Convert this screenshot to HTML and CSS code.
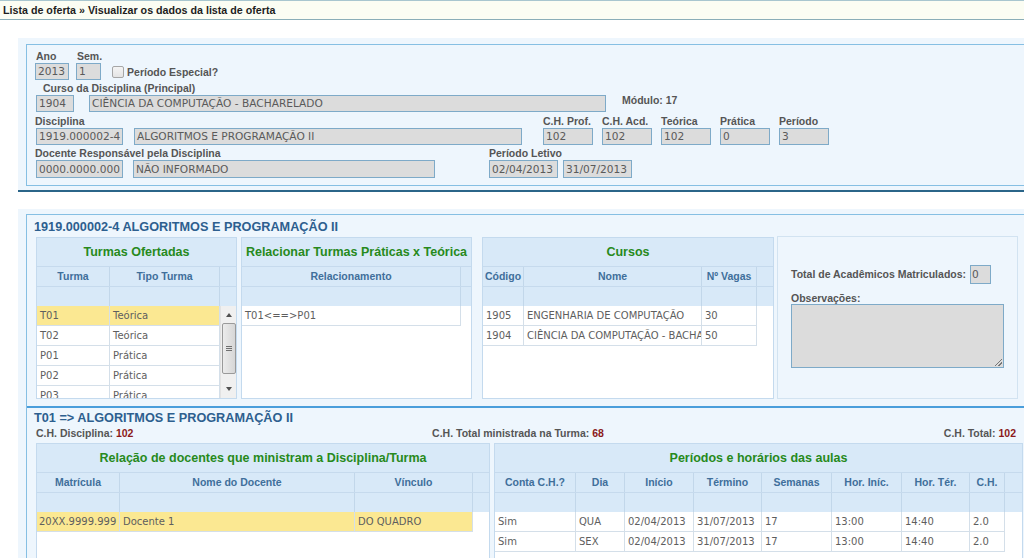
FILE: index.html
```html
<!DOCTYPE html>
<html lang="pt-BR">
<head>
<meta charset="utf-8">
<title>Lista de oferta</title>
<link rel="stylesheet" href="styles.css">
</head>
<body>
<div class="topbar">Lista de oferta » Visualizar os dados da lista de oferta</div>

<div class="panel p1">
  <div class="fs">
    <div class="row r1">
      <div class="field"><div class="lbl lbl-ano">Ano</div><div class="inp w-ano">2013</div></div>
      <div class="field f-sem"><div class="lbl">Sem.</div><div class="inp w-sem">1</div></div>
      <div class="chk-wrap"><span class="chk"></span><span class="lbl chk-lbl">Período Especial?</span></div>
    </div>
    <div class="row r2">
      <div class="field">
        <div class="lbl lbl-curso">Curso da Disciplina (Principal)</div>
        <div class="pair"><div class="inp w-cod">1904</div><div class="inp w-curso">CIÊNCIA DA COMPUTAÇÃO - BACHARELADO</div></div>
      </div>
      <div class="lbl modulo">Módulo: 17</div>
    </div>
    <div class="row r3">
      <div class="field">
        <div class="lbl">Disciplina</div>
        <div class="pair"><div class="inp w-disc">1919.000002-4</div><div class="inp w-discn">ALGORITMOS E PROGRAMAÇÃO II</div></div>
      </div>
      <div class="field f-ch1"><div class="lbl">C.H. Prof.</div><div class="inp w-ch">102</div></div>
      <div class="field f-ch"><div class="lbl">C.H. Acd.</div><div class="inp w-ch">102</div></div>
      <div class="field f-ch"><div class="lbl">Teórica</div><div class="inp w-ch">102</div></div>
      <div class="field f-ch"><div class="lbl">Prática</div><div class="inp w-ch">0</div></div>
      <div class="field f-ch"><div class="lbl">Período</div><div class="inp w-ch">3</div></div>
    </div>
    <div class="row r4">
      <div class="field">
        <div class="lbl">Docente Responsável pela Disciplina</div>
        <div class="pair"><div class="inp w-disc">0000.0000.000</div><div class="inp w-doc">NÃO INFORMADO</div></div>
      </div>
      <div class="field f-per">
        <div class="lbl">Período Letivo</div>
        <div class="pair pair-date"><div class="inp w-date">02/04/2013</div><div class="inp w-date">31/07/2013</div></div>
      </div>
    </div>
  </div>
</div>

<div class="panel p2">
  <div class="box2">
    <div class="sec sec2">
      <div class="sec-title">1919.000002-4 ALGORITMOS E PROGRAMAÇÃO II</div>
      <div class="grids">
        <div class="grid g-turmas">
          <div class="gtitle">Turmas Ofertadas</div>
          <div class="hrow cols-turmas"><div class="hc">Turma</div><div class="hc">Tipo Turma</div><div class="hc sp"></div></div>
          <div class="hrow cols-turmas"><div class="hc"></div><div class="hc"></div><div class="hc sp"></div></div>
          <div class="gdata scrolling">
            <div class="rows">
              <div class="drow cols-turmas-d sel"><div class="dc">T01</div><div class="dc">Teórica</div></div>
              <div class="drow cols-turmas-d"><div class="dc">T02</div><div class="dc">Teórica</div></div>
              <div class="drow cols-turmas-d"><div class="dc">P01</div><div class="dc">Prática</div></div>
              <div class="drow cols-turmas-d"><div class="dc">P02</div><div class="dc">Prática</div></div>
              <div class="drow cols-turmas-d"><div class="dc">P03</div><div class="dc">Prática</div></div>
            </div>
            <div class="sbar">
              <div class="sarrow up"></div>
              <div class="sthumb"><span class="grip"></span></div>
              <div class="sarrow down"></div>
            </div>
          </div>
        </div>

        <div class="grid g-rel">
          <div class="gtitle">Relacionar Turmas Práticas x Teórica</div>
          <div class="hrow cols-rel"><div class="hc">Relacionamento</div><div class="hc sp"></div></div>
          <div class="hrow cols-rel"><div class="hc"></div><div class="hc sp"></div></div>
          <div class="gdata">
            <div class="drow cols-rel-d"><div class="dc">T01&lt;==&gt;P01</div></div>
          </div>
        </div>

        <div class="grid g-cur">
          <div class="gtitle">Cursos</div>
          <div class="hrow cols-cur"><div class="hc">Código</div><div class="hc">Nome</div><div class="hc">Nº Vagas</div><div class="hc sp"></div></div>
          <div class="hrow cols-cur"><div class="hc"></div><div class="hc"></div><div class="hc"></div><div class="hc sp"></div></div>
          <div class="gdata">
            <div class="drow cols-cur-d"><div class="dc">1905</div><div class="dc">ENGENHARIA DE COMPUTAÇÃO</div><div class="dc">30</div></div>
            <div class="drow cols-cur-d"><div class="dc">1904</div><div class="dc">CIÊNCIA DA COMPUTAÇÃO - BACHARELADO</div><div class="dc">50</div></div>
          </div>
        </div>

        <div class="infobox">
          <div class="info-row"><span class="lbl">Total de Acadêmicos Matriculados:</span><div class="inp w-tot">0</div></div>
          <div class="lbl obs-lbl">Observações:</div>
          <div class="textarea"><span class="resize"></span></div>
        </div>
      </div>
    </div>

    <div class="sec sec3">
      <div class="sec-title">T01 =&gt; ALGORITMOS E PROGRAMAÇÃO II</div>
      <div class="chline">
        <div class="ch-left">C.H. Disciplina: <span class="val">102</span></div>
        <div class="ch-mid">C.H. Total ministrada na Turma: <span class="val">68</span></div>
        <div class="ch-right">C.H. Total: <span class="val">102</span></div>
      </div>
      <div class="grids grids3">
        <div class="grid g-doc">
          <div class="gtitle">Relação de docentes que ministram a Disciplina/Turma</div>
          <div class="hrow cols-doc"><div class="hc">Matrícula</div><div class="hc">Nome do Docente</div><div class="hc">Vínculo</div><div class="hc sp"></div></div>
          <div class="hrow cols-doc"><div class="hc"></div><div class="hc"></div><div class="hc"></div><div class="hc sp"></div></div>
          <div class="gdata tall">
            <div class="drow cols-doc-d sel"><div class="dc tight">20XX.9999.999</div><div class="dc">Docente 1</div><div class="dc">DO QUADRO</div></div>
          </div>
        </div>

        <div class="grid g-per">
          <div class="gtitle">Períodos e horários das aulas</div>
          <div class="hrow cols-per"><div class="hc">Conta C.H.?</div><div class="hc">Dia</div><div class="hc">Início</div><div class="hc">Término</div><div class="hc">Semanas</div><div class="hc">Hor. Iníc.</div><div class="hc">Hor. Tér.</div><div class="hc">C.H.</div><div class="hc sp"></div></div>
          <div class="hrow cols-per"><div class="hc"></div><div class="hc"></div><div class="hc"></div><div class="hc"></div><div class="hc"></div><div class="hc"></div><div class="hc"></div><div class="hc"></div><div class="hc sp"></div></div>
          <div class="gdata tall">
            <div class="drow cols-per-d"><div class="dc">Sim</div><div class="dc">QUA</div><div class="dc">02/04/2013</div><div class="dc">31/07/2013</div><div class="dc">17</div><div class="dc">13:00</div><div class="dc">14:40</div><div class="dc">2.0</div></div>
            <div class="drow cols-per-d"><div class="dc">Sim</div><div class="dc">SEX</div><div class="dc">02/04/2013</div><div class="dc">31/07/2013</div><div class="dc">17</div><div class="dc">13:00</div><div class="dc">14:40</div><div class="dc">2.0</div></div>
          </div>
        </div>
      </div>
    </div>
  </div>
</div>
</body>
</html>
```

FILE: styles.css
```css
html, body {
  margin: 0;
  padding: 0;
  width: 1024px;
  height: 558px;
  overflow: hidden;
  background: #ffffff;
}

body {
  font-family: "DejaVu Sans", Verdana, sans-serif;
  font-size: 10.6px;
  color: #555555;
}

.topbar {
  box-sizing: border-box;
  height: 20px;
  line-height: 18px;
  border-top: 1px solid #a8c6cf;
  border-bottom: 1px solid #8aaeb8;
  background: #fbfdf3;
  padding-left: 3px;
  font-family: "Liberation Sans", Arial, sans-serif;
  font-weight: bold;
  font-size: 10.7px;
  color: #1e1e1e;
}

.lbl {
  font-family: "Liberation Sans", Arial, sans-serif;
  font-weight: bold;
  font-size: 10.5px;
  color: #555555;
  line-height: 13px;
  height: 13px;
  white-space: nowrap;
}

.panel {
  margin-left: 18px;
  background: #eef6fd;
}

/* ---------- panel 1 ---------- */
.p1 {
  margin-top: 18px;
  padding: 6px 0 4px 8px;
  border-bottom: 2px solid #2b6589;
}

.fs {
  border: 1px solid #86bfe3;
  border-right: none;
  padding: 5px 0 7px 8px;
}

.row {
  display: flex;
  align-items: flex-end;
}

.r2 { margin-top: 2px; }
.r3 { margin-top: 3px; }
.r4 { margin-top: 2px; }

.field {
  display: flex;
  flex-direction: column;
}

.pair {
  display: flex;
  margin-left: 1px;
}

.inp {
  box-sizing: border-box;
  height: 17px;
  line-height: 15px;
  background: #dcdcdc;
  border: 1px solid #7eaac8;
  padding-left: 2px;
  color: #5a5a5a;
  white-space: nowrap;
  overflow: hidden;
}

.lbl-ano { padding-left: 1px; }
.w-ano { width: 34px; }
.f-sem { margin-left: 7px; }
.f-sem .lbl { padding-left: 1px; }
.w-sem { width: 25px; }

.chk-wrap {
  display: flex;
  align-items: center;
  margin-left: 10px;
  margin-bottom: 1px;
}

.chk {
  width: 12px;
  height: 12px;
  box-sizing: border-box;
  border: 1px solid #a6a6a6;
  border-radius: 2px;
  background: linear-gradient(#f4f4f4, #e4e4e4);
}

.chk-lbl { margin-left: 3px; margin-top: 2px; }

.lbl-curso { padding-left: 8px; }
.w-cod { width: 38px; }
.w-curso { width: 517px; margin-left: 15px; }
.modulo { margin-left: 16px; margin-bottom: 5px; }

.w-disc { width: 87px; }
.w-discn { width: 388px; margin-left: 11px; }
.f-ch1 { margin-left: 21px; }
.f-ch { margin-left: 9px; }
.w-ch { width: 50px; }

.w-doc { width: 302px; margin-left: 10px; }
.f-per { margin-left: 54px; }
.pair-date { margin-left: 0; }
.w-date { width: 69px; }
.pair-date .w-date + .w-date { margin-left: 5px; }
.r4 .inp { height: 18px; line-height: 16px; }

/* ---------- panel 2/3 ---------- */
.p2 {
  margin-top: 17px;
  padding: 5px 0 0 8px;
  height: 400px;
}

.box2 {
  border-left: 1px solid #86bfe3;
  border-top: 1px solid #86bfe3;
  height: 100%;
}

.sec {
  padding-left: 9px;
}

.sec2 { padding-top: 4px; }

.sec-title {
  font-family: "Liberation Sans", Arial, sans-serif;
  font-weight: bold;
  font-size: 12.7px;
  line-height: 16px;
  height: 16px;
  color: #2d5f8f;
  margin-left: -2px;
  margin-bottom: 2px;
  white-space: nowrap;
}

.grids {
  display: flex;
  align-items: flex-start;
}

.grid {
  border: 1px solid #c4daee;
  background: #ffffff;
  flex: none;
  box-sizing: border-box;
}

.gtitle {
  height: 28px;
  line-height: 28px;
  background: #d8e9f8;
  text-align: center;
  font-family: "Liberation Sans", Arial, sans-serif;
  font-weight: bold;
  font-size: 12.5px;
  color: #278a1c;
  white-space: nowrap;
}

.hrow {
  display: grid;
  background: #d8e9f8;
  border-top: 1px solid #c6daed;
  height: 20px;
  box-sizing: border-box;
}

.hc {
  border-right: 1px solid #c2d7ea;
  text-align: center;
  font-family: "Liberation Sans", Arial, sans-serif;
  font-weight: bold;
  font-size: 10.5px;
  line-height: 18px;
  color: #406f9b;
  white-space: nowrap;
  overflow: hidden;
}

.hc.sp { border-right: none; }

.gdata {
  height: 92px;
  background: #ffffff;
  overflow: hidden;
}

.gdata.tall { height: 200px; }

.drow {
  display: grid;
}

.dc {
  box-sizing: border-box;
  height: 20px;
  line-height: 19px;
  border-right: 1px solid #d4dfe9;
  border-bottom: 1px solid #d4dfe9;
  padding-left: 3px;
  white-space: nowrap;
  overflow: hidden;
  font-size: 10px;
  color: #5e5e5e;
}

.dc.tight { padding-left: 2px; }

.drow.sel .dc { background: #fbe892; }

.cols-turmas { grid-template-columns: 73px 110px 16px; }
.cols-turmas-d { grid-template-columns: 73px 110px; }
.cols-rel { grid-template-columns: 219px 10px; }
.cols-rel-d { grid-template-columns: 219px; }
.cols-cur { grid-template-columns: 41px 178px 55px 16px; }
.cols-cur-d { grid-template-columns: 41px 178px 55px; }
.cols-doc { grid-template-columns: 83px 235px 118px 16px; }
.cols-doc-d { grid-template-columns: 83px 235px 118px; }
.cols-per { grid-template-columns: 81px 49px 69px 68px 70px 70px 68px 35px 17px; }
.cols-per-d { grid-template-columns: 81px 49px 69px 68px 70px 70px 68px 35px; }

.g-turmas { width: 201px; margin-right: 4px; }
.g-rel { width: 231px; margin-right: 10px; }
.g-cur { width: 292px; margin-right: 3px; }
.g-doc { width: 454px; margin-right: 4px; }
.g-per { width: 529px; }

.scrolling {
  display: flex;
}

.rows { width: 183px; }

.sbar {
  width: 16px;
  height: 92px;
  background: #f0f0f0;
  border-left: 1px solid #e2e2e2;
  box-sizing: border-box;
  display: flex;
  flex-direction: column;
  align-items: center;
}

.sarrow {
  width: 0;
  height: 0;
  border-left: 3px solid transparent;
  border-right: 3px solid transparent;
}

.sarrow.up {
  border-bottom: 4px solid #505050;
  margin-top: 7px;
}

.sarrow.down {
  border-top: 4px solid #505050;
  margin-top: auto;
  margin-bottom: 7px;
}

.sthumb {
  margin-top: 6px;
  width: 14px;
  height: 51px;
  box-sizing: border-box;
  border: 1px solid #9a9a9a;
  border-radius: 2px;
  background: linear-gradient(90deg, #ececec, #d6d6d6);
  display: flex;
  align-items: center;
  justify-content: center;
}

.grip {
  width: 6px;
  height: 5px;
  border-top: 1px solid #707070;
  border-bottom: 1px solid #707070;
  box-sizing: border-box;
  background: linear-gradient(#707070, #707070) center / 100% 1px no-repeat;
}

.infobox {
  width: 241px;
  height: 163px;
  margin-top: -1px;
  box-sizing: border-box;
  border: 1px solid #d2e3f1;
  background: #eef6fd;
  padding: 28px 0 0 13px;
  flex: none;
}

.info-row {
  display: flex;
  align-items: center;
}

.w-tot {
  width: 21px;
  height: 19px;
  line-height: 17px;
  margin-left: 4px;
  padding-left: 1px;
}

.obs-lbl {
  margin-top: 8px;
  height: 12px;
  line-height: 12px;
}

.textarea {
  width: 213px;
  height: 64px;
  box-sizing: border-box;
  background: #dcdcdc;
  border: 1px solid #7eaac8;
  position: relative;
}

.resize {
  position: absolute;
  right: 1px;
  bottom: 1px;
  width: 7px;
  height: 7px;
  background: linear-gradient(135deg, transparent 45%, #777 45%, #777 55%, transparent 55%, transparent 70%, #777 70%, #777 80%, transparent 80%);
}

.sec3 {
  margin-top: 7px;
  border-top: 2px solid #4a9edb;
  padding-top: 2px;
}

.chline {
  display: grid;
  grid-template-columns: 1fr 1fr 1fr;
  height: 14px;
  line-height: 14px;
  width: 980px;
  margin-top: -2px;
  margin-bottom: 3px;
  font-family: "Liberation Sans", Arial, sans-serif;
  font-weight: bold;
  font-size: 10.5px;
  color: #555555;
  white-space: nowrap;
}

.ch-mid { text-align: center; margin-left: -16px; }
.ch-right { text-align: right; }

.val {
  color: #8b1a1a;
}
```
